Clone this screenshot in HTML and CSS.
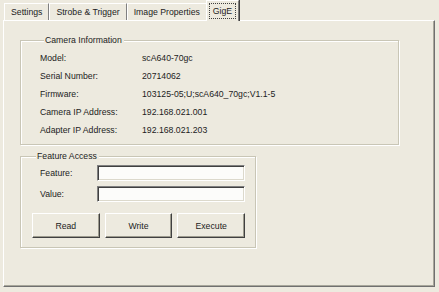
FILE: index.html
```html
<!DOCTYPE html>
<html lang="en">
<head>
    <meta charset="UTF-8">
    <title>Camera Properties</title>
    <link rel="stylesheet" href="styles.css">
</head>
<body>
    <div class="dialog">
        <div class="tabs">
            <div class="tab">Settings</div>
            <div class="tab">Strobe &amp; Trigger</div>
            <div class="tab">Image Properties</div>
            <div class="tab active"><span class="focus">GigE</span></div>
        </div>

        <div class="page">
            <fieldset class="group camera-info">
                <legend>Camera Information</legend>
                <div class="info-grid">
                    <div>Model:</div>
                    <div>scA640-70gc</div>
                    <div>Serial Number:</div>
                    <div>20714062</div>
                    <div>Firmware:</div>
                    <div>103125-05;U;scA640_70gc;V1.1-5</div>
                    <div>Camera IP Address:</div>
                    <div>192.168.021.001</div>
                    <div>Adapter IP Address:</div>
                    <div>192.168.021.203</div>
                </div>
            </fieldset>

            <fieldset class="group feature-access">
                <legend>Feature Access</legend>
                <div class="field-row">
                    <label for="feature">Feature:</label>
                    <input id="feature" type="text">
                </div>
                <div class="field-row">
                    <label for="value">Value:</label>
                    <input id="value" type="text">
                </div>
                <div class="buttons">
                    <button>Read</button>
                    <button>Write</button>
                    <button>Execute</button>
                </div>
            </fieldset>
        </div>
    </div>
</body>
</html>
```

FILE: styles.css
```css
body {
    margin: 0;
    font-family: "Liberation Sans", Arial, sans-serif;
    font-size: 8.7px;
    color: #1c1c1c;
    background-color: #edeadf;
}

.dialog {
    width: 439px;
    height: 292px;
    padding: 1px 0 0 3px;
    box-sizing: border-box;
}

.tabs {
    display: flex;
    align-items: flex-end;
    height: 19px;
    padding-left: 1px;
}

.tab {
    height: 17px;
    line-height: 16px;
    padding: 0 6px;
    border-top: 1px solid #fff;
    border-left: 1px solid #fff;
    border-right: 1px solid #808080;
    box-sizing: border-box;
}

.tab.active {
    position: relative;
    height: 21px;
    margin: 0 0 -1px -1px;
    padding: 2px 2px 0 2px;
    background-color: #edeadf;
    box-shadow: 1px 0 0 #404040;
    z-index: 1;
}

.focus {
    display: block;
    line-height: 14px;
    padding: 0 3px;
    border: 1px dotted #404040;
}

.page {
    width: 432px;
    height: 267px;
    box-sizing: border-box;
    border-top: 1px solid #fff;
    border-left: 1px solid #fff;
    border-right: 1px solid #707070;
    border-bottom: 1px solid #707070;
    box-shadow: inset -1px -1px 0 #a8a79b;
    padding: 0 0 0 16px;
}

.group {
    margin: 0;
    border: 1px solid #c9c6b6;
    box-shadow: inset 1px 1px 0 #fff, 1px 1px 0 #fff;
    box-sizing: border-box;
}

.group legend {
    line-height: 12px;
    padding: 0 2px 0 1px;
    margin-left: 4px;
    background-color: #edeadf;
}

.camera-info {
    width: 379px;
    margin-top: 13px;
    padding: 3px 0 5px 19px;
}

.info-grid {
    display: grid;
    grid-template-columns: 102px auto;
    grid-auto-rows: 18px;
    align-items: center;
}

.feature-access {
    width: 236px;
    margin-top: 5px;
    padding: 3px 10px 9px 11px;
}

.field-row {
    display: flex;
    align-items: center;
    height: 16px;
    margin-bottom: 5px;
}

.field-row label {
    width: 57px;
    margin-left: 8px;
}

.field-row input {
    width: 148px;
    height: 16px;
    box-sizing: border-box;
    margin: 0;
    padding: 0 2px;
    font: inherit;
    background-color: #fcfcfa;
    border: 1px solid;
    border-color: #808080 #fff #fff #808080;
    box-shadow: inset 1px 1px 0 #404040, inset -1px -1px 0 #dcd9cc;
}

.buttons {
    display: flex;
    gap: 5px;
    margin-top: 11px;
}

.buttons button {
    flex: 1;
    height: 25px;
    margin: 0;
    padding: 0;
    font: inherit;
    color: #1c1c1c;
    background-color: #edeadf;
    border: 1px solid;
    border-color: #fff #404040 #404040 #fff;
    box-shadow: inset -1px -1px 0 #9d9b8e;
}
```
